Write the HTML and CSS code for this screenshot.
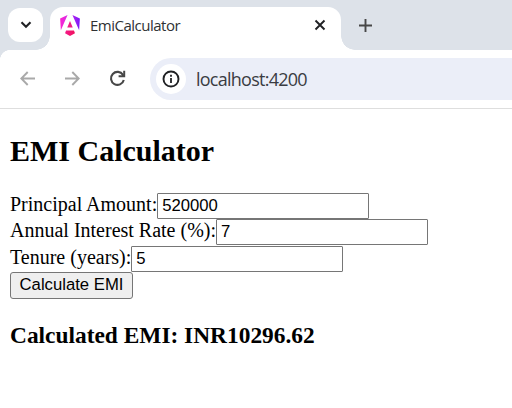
FILE: index.html
```html
<!DOCTYPE html>
<html lang="en">
<head>
<meta charset="utf-8">
<title>EmiCalculator</title>
<link rel="stylesheet" href="styles.css">
</head>
<body>
<header class="tab-strip">
  <button class="tab-search" aria-label="Search tabs">
    <svg width="12" height="8" viewBox="0 0 12 8"><path d="M1.5 1.3 6 5.8l4.5-4.5" fill="none" stroke="#202124" stroke-width="2.1"/></svg>
  </button>
  <div class="tab">
    <svg class="favicon" width="20" height="21" viewBox="0 0 223 237">
      <defs>
        <linearGradient id="shield" gradientUnits="userSpaceOnUse" x1="0" y1="0" x2="223" y2="0"><stop offset="0" stop-color="#fb24d0"/><stop offset=".4" stop-color="#d62be8"/><stop offset="1" stop-color="#7b18fa"/></linearGradient>
        <linearGradient id="base" x1="0" y1="0" x2="1" y2="0"><stop offset="0" stop-color="#f51b8b"/><stop offset="1" stop-color="#f0105a"/></linearGradient>
      </defs>
      <path d="M84 0 8.400 171.200 0 39.400zM139 0l84 39.400-8.500 131.800z" fill="url(#shield)"/>
      <path d="m111.500 69 31 72h-62z" fill="#ee1c86"/>
      <path d="M66.900 175h89.200l11.400 29.800-56 32-56-32z" fill="url(#base)"/>
    </svg>
    <span class="tab-title">EmiCalculator</span>
    <svg class="close" width="12" height="12" viewBox="0 0 12 12"><path d="m1.5 1.5 9 9m0-9-9 9" stroke="#202124" stroke-width="1.9"/></svg>
  </div>
  <svg class="new-tab" width="13" height="13" viewBox="0 0 13 13"><path d="M6.5 0v13M0 6.5h13" stroke="#474747" stroke-width="1.9"/></svg>
</header>
<nav class="toolbar">
  <svg class="nav-icon" width="15" height="15" viewBox="0 0 15 15"><path d="M15 7.5H1.5M7.7 1 1.3 7.5 7.7 14" fill="none" stroke="#a9a9a9" stroke-width="1.9"/></svg>
  <svg class="nav-icon forward" width="15" height="15" viewBox="0 0 15 15"><path d="M0 7.5h13.5M7.3 1l6.4 6.5L7.3 14" fill="none" stroke="#a9a9a9" stroke-width="1.9"/></svg>
  <svg class="nav-icon reload" width="17" height="17" viewBox="0 0 17 17"><path d="M14 4.9A6.5 6.5 0 1 0 14.8 10" fill="none" stroke="#474747" stroke-width="2.1"/><path d="M14.2.8h2v6.4H9.6v-2h3.200l1.400-1z" fill="#474747"/></svg>
  <div class="address">
    <span class="site-info">
      <svg width="18" height="18" viewBox="0 0 18 18"><circle cx="9" cy="9" r="7.5" fill="none" stroke="#202124" stroke-width="1.9"/><path d="M9 8v5M9 4.8v1.9" stroke="#202124" stroke-width="1.8"/></svg>
    </span>
    <span class="url">localhost:4200</span>
  </div>
</nav>
<main class="page">
  <h2>EMI Calculator</h2>
  <form>
    <div class="field"><label for="principal">Principal Amount:</label><input id="principal" value="520000"></div>
    <div class="field"><label for="rate">Annual Interest Rate (%):</label><input id="rate" value="7"></div>
    <div class="field"><label for="tenure">Tenure (years):</label><input id="tenure" value="5"></div>
    <button class="calculate" type="button">Calculate EMI</button>
  </form>
  <h3>Calculated EMI: INR10296.62</h3>
</main>
</body>
</html>
```
FILE: styles.css
```css
* { box-sizing: border-box; }
body {
  margin: 0;
  background: #fff;
  color: #000;
  font-family: "Liberation Serif", serif;
  font-size: 20px;
  height: 408px;
  overflow: hidden;
}
svg { display: block; flex: none; }
.tab-strip {
  display: flex;
  height: 50px;
  background: #dde2e9;
}
.tab-search {
  display: flex;
  align-items: center;
  justify-content: center;
  width: 35px;
  height: 34px;
  margin: 8px 7px 0 8px;
  padding: 0;
  border: 0;
  border-radius: 12px;
  background: #fff;
}
.tab {
  position: relative;
  display: flex;
  align-items: center;
  width: 291px;
  height: 43px;
  margin-top: 7px;
  padding: 0 15px 7px 10px;
  border-radius: 13px 13px 0 0;
  background: #fff;
}
.tab::before,
.tab::after {
  content: "";
  position: absolute;
  bottom: 0;
  width: 14px;
  height: 14px;
}
.tab::before {
  right: 100%;
  background: radial-gradient(circle at 0 0, transparent 13.5px, #fff 14px);
}
.tab::after {
  left: 100%;
  background: radial-gradient(circle at 100% 0, transparent 13.5px, #fff 14px);
}
.tab-title {
  flex: 1;
  margin-left: 10px;
  font: 15px/20px "Open Sans", sans-serif;
  letter-spacing: -0.5px;
  color: #303134;
}
.new-tab { margin: 19px 0 0 18px; }
.toolbar {
  position: relative;
  display: flex;
  align-items: center;
  height: 59px;
  padding: 0 0 1px 20px;
  border-bottom: 1px solid #dedede;
  background: radial-gradient(circle at 10px 10px, #fff 9.7px, #dde2e9 10.2px) 0 0 / 10px 10px no-repeat #fff;
}
.forward { margin-left: 30px; }
.reload { margin-left: 29px; }
.address {
  display: flex;
  align-items: center;
  flex: 1;
  height: 42px;
  margin: 1px 0 0 24px;
  padding-left: 6px;
  border-radius: 21px 0 0 21px;
  background: #ebeef8;
}
.site-info {
  display: flex;
  align-items: center;
  justify-content: center;
  width: 30px;
  height: 30px;
  border-radius: 50%;
  background: #fff;
}
.url {
  margin-left: 10px;
  font: 18px/24px "Open Sans", sans-serif;
  letter-spacing: -0.75px;
  color: #3a3c42;
}
.page { padding: 25px 10px 0; }
h2 { margin: 0 0 25px; font-size: 30px; line-height: 34px; }
h3 { margin: 23.3px 0 0; font-size: 23.4px; line-height: 27px; }
.field {
  display: flex;
  align-items: center;
  height: 26.3px;
}
label { line-height: 23px; margin-top: -3px; white-space: nowrap; }
input {
  width: 212px;
  height: 26px;
  padding: 1px 4px;
  border: 1px solid #767676;
  border-radius: 1px;
  background: #fff;
  color: #000;
  font: 16.7px "Liberation Sans", sans-serif;
}
.calculate {
  display: block;
  width: 123px;
  height: 27px;
  padding: 0;
  border: 1px solid #767676;
  border-radius: 3px;
  background: #efefef;
  color: #000;
  font: 16.7px "Liberation Sans", sans-serif;
}
```
